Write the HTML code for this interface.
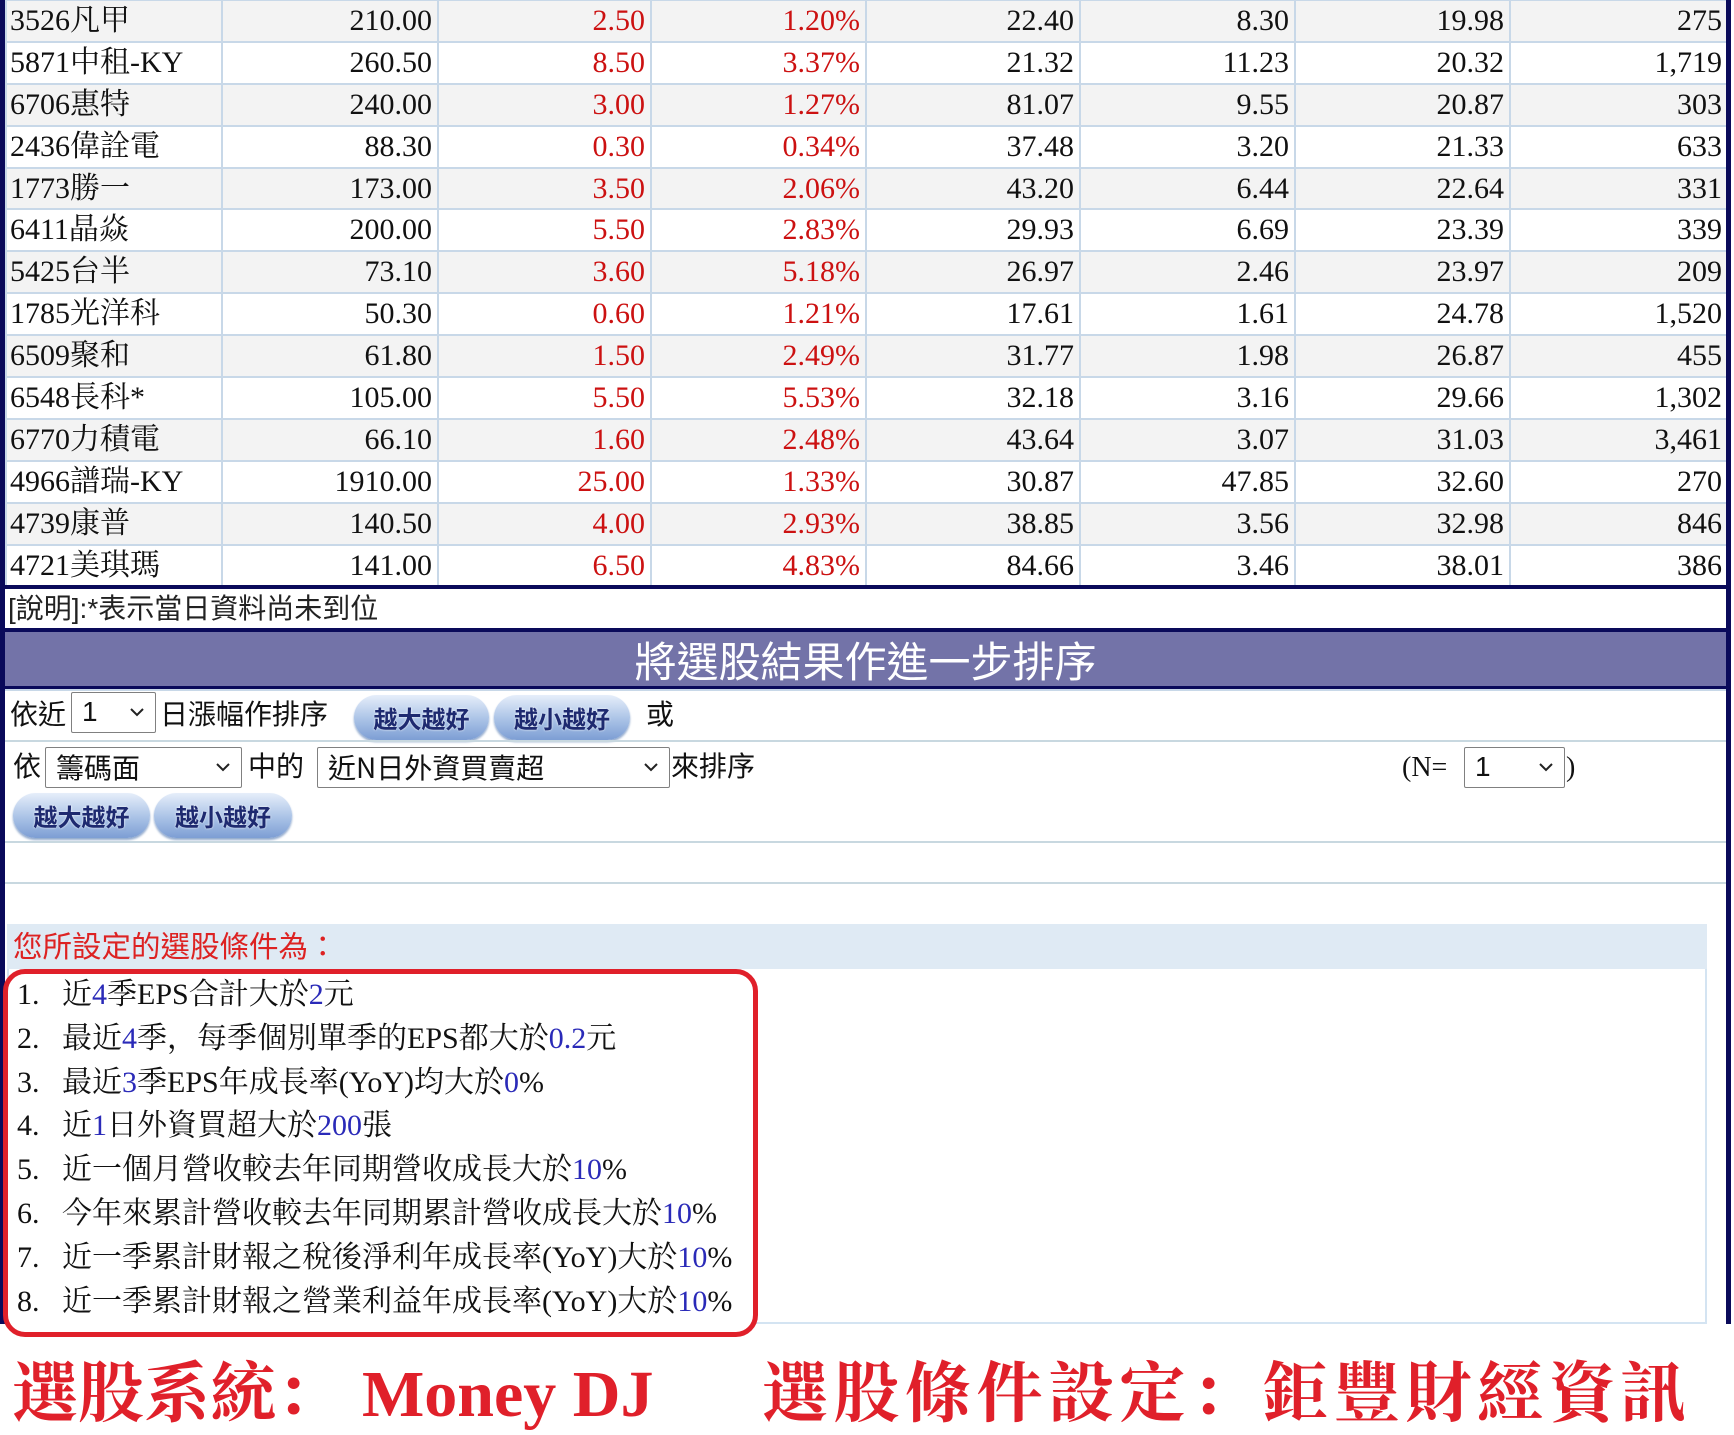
<!DOCTYPE html>
<html><head><meta charset="utf-8"><style>
*{margin:0;padding:0;box-sizing:border-box}
body{width:1734px;height:1434px;position:relative;background:#fff;overflow:hidden;font-family:"Liberation Serif","Noto Serif CJK SC",serif;color:#111}
.abs{position:absolute}
table{position:absolute;left:5px;top:-1px;width:1722px;border-collapse:collapse;table-layout:fixed}
td{height:41.9px;border:2px solid #c8d8e8;font-size:30px;line-height:38px;padding:0 5px;text-align:right;white-space:nowrap;overflow:hidden}
td:first-child{text-align:left;padding-left:3px;color:#111}
tr:nth-child(odd) td{background:#f3f3f3}
.r{color:#cc1111}
.nav{background:#0a0a5a}
.sel{position:absolute;background:#fff;border:1.5px solid #808080;border-radius:2px;font-family:"Liberation Sans","Noto Sans CJK TC",sans-serif;font-size:28px;line-height:38px;padding-left:10px;color:#111}
.sel svg{position:absolute;right:10px;top:13px}
.btn{position:absolute;height:45px;border-radius:23px;background:linear-gradient(#e6eefa,#a9c2e6 55%,#7d9ed4);box-shadow:0 2px 2px #8fa8cc;color:#1e2a70;font-weight:bold;font-size:24px;line-height:45px;text-align:center;font-family:"Noto Sans CJK TC",sans-serif;text-shadow:0 0 2px #fff}
.t{position:absolute;font-size:28px;font-family:"Liberation Serif","Noto Sans CJK TC",sans-serif;white-space:nowrap}
.c{position:absolute;left:17px;font-size:30px;line-height:40px;white-space:nowrap}
.c b{font-weight:normal;color:#2a2ab8}
</style></head><body>
<table>
<colgroup><col style="width:216px"><col style="width:216px"><col style="width:213px"><col style="width:215px"><col style="width:214px"><col style="width:215px"><col style="width:215px"><col style="width:218px"></colgroup>
<tr><td>3526凡甲</td><td>210.00</td><td class="r">2.50</td><td class="r">1.20%</td><td>22.40</td><td>8.30</td><td>19.98</td><td>275</td></tr>
<tr><td>5871中租-KY</td><td>260.50</td><td class="r">8.50</td><td class="r">3.37%</td><td>21.32</td><td>11.23</td><td>20.32</td><td>1,719</td></tr>
<tr><td>6706惠特</td><td>240.00</td><td class="r">3.00</td><td class="r">1.27%</td><td>81.07</td><td>9.55</td><td>20.87</td><td>303</td></tr>
<tr><td>2436偉詮電</td><td>88.30</td><td class="r">0.30</td><td class="r">0.34%</td><td>37.48</td><td>3.20</td><td>21.33</td><td>633</td></tr>
<tr><td>1773勝一</td><td>173.00</td><td class="r">3.50</td><td class="r">2.06%</td><td>43.20</td><td>6.44</td><td>22.64</td><td>331</td></tr>
<tr><td>6411晶焱</td><td>200.00</td><td class="r">5.50</td><td class="r">2.83%</td><td>29.93</td><td>6.69</td><td>23.39</td><td>339</td></tr>
<tr><td>5425台半</td><td>73.10</td><td class="r">3.60</td><td class="r">5.18%</td><td>26.97</td><td>2.46</td><td>23.97</td><td>209</td></tr>
<tr><td>1785光洋科</td><td>50.30</td><td class="r">0.60</td><td class="r">1.21%</td><td>17.61</td><td>1.61</td><td>24.78</td><td>1,520</td></tr>
<tr><td>6509聚和</td><td>61.80</td><td class="r">1.50</td><td class="r">2.49%</td><td>31.77</td><td>1.98</td><td>26.87</td><td>455</td></tr>
<tr><td>6548長科*</td><td>105.00</td><td class="r">5.50</td><td class="r">5.53%</td><td>32.18</td><td>3.16</td><td>29.66</td><td>1,302</td></tr>
<tr><td>6770力積電</td><td>66.10</td><td class="r">1.60</td><td class="r">2.48%</td><td>43.64</td><td>3.07</td><td>31.03</td><td>3,461</td></tr>
<tr><td>4966譜瑞-KY</td><td>1910.00</td><td class="r">25.00</td><td class="r">1.33%</td><td>30.87</td><td>47.85</td><td>32.60</td><td>270</td></tr>
<tr><td>4739康普</td><td>140.50</td><td class="r">4.00</td><td class="r">2.93%</td><td>38.85</td><td>3.56</td><td>32.98</td><td>846</td></tr>
<tr><td>4721美琪瑪</td><td>141.00</td><td class="r">6.50</td><td class="r">4.83%</td><td>84.66</td><td>3.46</td><td>38.01</td><td>386</td></tr>
</table>
<div class="abs nav" style="left:0;top:0;width:5px;height:1324px"></div>
<div class="abs nav" style="left:1726px;top:0;width:5px;height:1324px"></div>
<div class="abs nav" style="left:0;top:585px;width:1731px;height:4px"></div>
<div class="t" style="left:8px;top:590px;line-height:38px;font-family:'Liberation Sans','Noto Sans CJK TC',sans-serif;color:#222">[說明]:*表示當日資料尚未到位</div>
<div class="abs nav" style="left:0;top:628px;width:1731px;height:4px"></div>
<div class="abs" style="left:5px;top:632px;width:1721px;height:55px;background:#7373a8;color:#fff;text-align:center;font-size:42px;line-height:55px;font-family:'Noto Sans CJK TC',sans-serif">將選股結果作進一步排序</div>
<div class="abs nav" style="left:0;top:686px;width:1731px;height:3px"></div>
<div class="abs" style="left:5px;top:689px;width:1721px;height:2px;background:#c8d8e8"></div>
<div class="t" style="left:10px;top:696px;line-height:40px">依近</div>
<div class="sel" style="left:71px;top:692px;width:85px;height:41px">1<svg width="16" height="12" viewBox="0 0 16 12"><path d="M2 3l6 6 6-6" fill="none" stroke="#222" stroke-width="2"/></svg></div>
<div class="t" style="left:160px;top:696px;line-height:40px">日漲幅作排序</div>
<div class="btn" style="left:354px;top:695px;width:135px">越大越好</div>
<div class="btn" style="left:494px;top:695px;width:136px">越小越好</div>
<div class="t" style="left:646px;top:696px;line-height:40px">或</div>
<div class="abs" style="left:5px;top:740px;width:1721px;height:2px;background:#c8d8e0"></div>
<div class="t" style="left:13px;top:748px;line-height:40px">依</div>
<div class="sel" style="left:45px;top:747px;width:197px;height:41px;font-family:'Noto Sans CJK TC',sans-serif">籌碼面<svg width="16" height="12" viewBox="0 0 16 12"><path d="M2 3l6 6 6-6" fill="none" stroke="#222" stroke-width="2"/></svg></div>
<div class="t" style="left:248px;top:748px;line-height:40px">中的</div>
<div class="sel" style="left:317px;top:747px;width:353px;height:41px;font-family:'Noto Sans CJK TC',sans-serif">近N日外資買賣超<svg width="16" height="12" viewBox="0 0 16 12"><path d="M2 3l6 6 6-6" fill="none" stroke="#222" stroke-width="2"/></svg></div>
<div class="t" style="left:671px;top:748px;line-height:40px">來排序</div>
<div class="t" style="left:1402px;top:748px;line-height:40px">(N=</div>
<div class="sel" style="left:1464px;top:747px;width:101px;height:41px">1<svg width="16" height="12" viewBox="0 0 16 12"><path d="M2 3l6 6 6-6" fill="none" stroke="#222" stroke-width="2"/></svg></div>
<div class="t" style="left:1566px;top:748px;line-height:40px">)</div>
<div class="btn" style="left:13px;top:793px;width:137px">越大越好</div>
<div class="btn" style="left:154px;top:793px;width:138px">越小越好</div>
<div class="abs" style="left:5px;top:841px;width:1721px;height:2px;background:#c8d8e0"></div>
<div class="abs" style="left:5px;top:882px;width:1721px;height:2px;background:#c8d8e0"></div>
<div class="abs" style="left:7px;top:924px;width:1700px;height:400px;border:2px solid #d4e4f2;border-top:none"></div>
<div class="abs" style="left:7px;top:924px;width:1700px;height:45px;background:#dfeaf4"></div>
<div class="t" style="left:13px;top:929px;line-height:38px;color:#dd2222;font-size:29.5px">您所設定的選股條件為：</div>
<div class="abs" style="left:3px;top:969px;width:755px;height:368px;border:5px solid #e0202a;border-radius:22px;background:#fff"></div>
<div class="c" style="top:975px">1.&nbsp;&nbsp; 近<b>4</b>季EPS合計大於<b>2</b>元</div>
<div class="c" style="top:1019px">2.&nbsp;&nbsp; 最近<b>4</b>季，每季個別單季的EPS都大於<b>0.2</b>元</div>
<div class="c" style="top:1063px">3.&nbsp;&nbsp; 最近<b>3</b>季EPS年成長率(YoY)均大於<b>0</b>%</div>
<div class="c" style="top:1106px">4.&nbsp;&nbsp; 近<b>1</b>日外資買超大於<b>200</b>張</div>
<div class="c" style="top:1150px">5.&nbsp;&nbsp; 近一個月營收較去年同期營收成長大於<b>10</b>%</div>
<div class="c" style="top:1194px">6.&nbsp;&nbsp; 今年來累計營收較去年同期累計營收成長大於<b>10</b>%</div>
<div class="c" style="top:1238px">7.&nbsp;&nbsp; 近一季累計財報之稅後淨利年成長率(YoY)大於<b>10</b>%</div>
<div class="c" style="top:1282px">8.&nbsp;&nbsp; 近一季累計財報之營業利益年成長率(YoY)大於<b>10</b>%</div>
<div class="abs" style="left:12px;top:1350px;font-size:66px;line-height:76px;color:#e0202a;font-weight:bold;white-space:nowrap;font-family:'Noto Serif CJK SC',serif">選股系統：<span style="font-family:'Liberation Serif',serif;margin-left:20px">Money DJ</span></div>
<div class="abs" style="left:762px;top:1350px;font-size:66px;line-height:76px;color:#e0202a;font-weight:bold;white-space:nowrap;letter-spacing:5.5px;font-family:'Noto Serif CJK SC',serif">選股條件設定：鉅豐財經資訊</div>
</body></html>
